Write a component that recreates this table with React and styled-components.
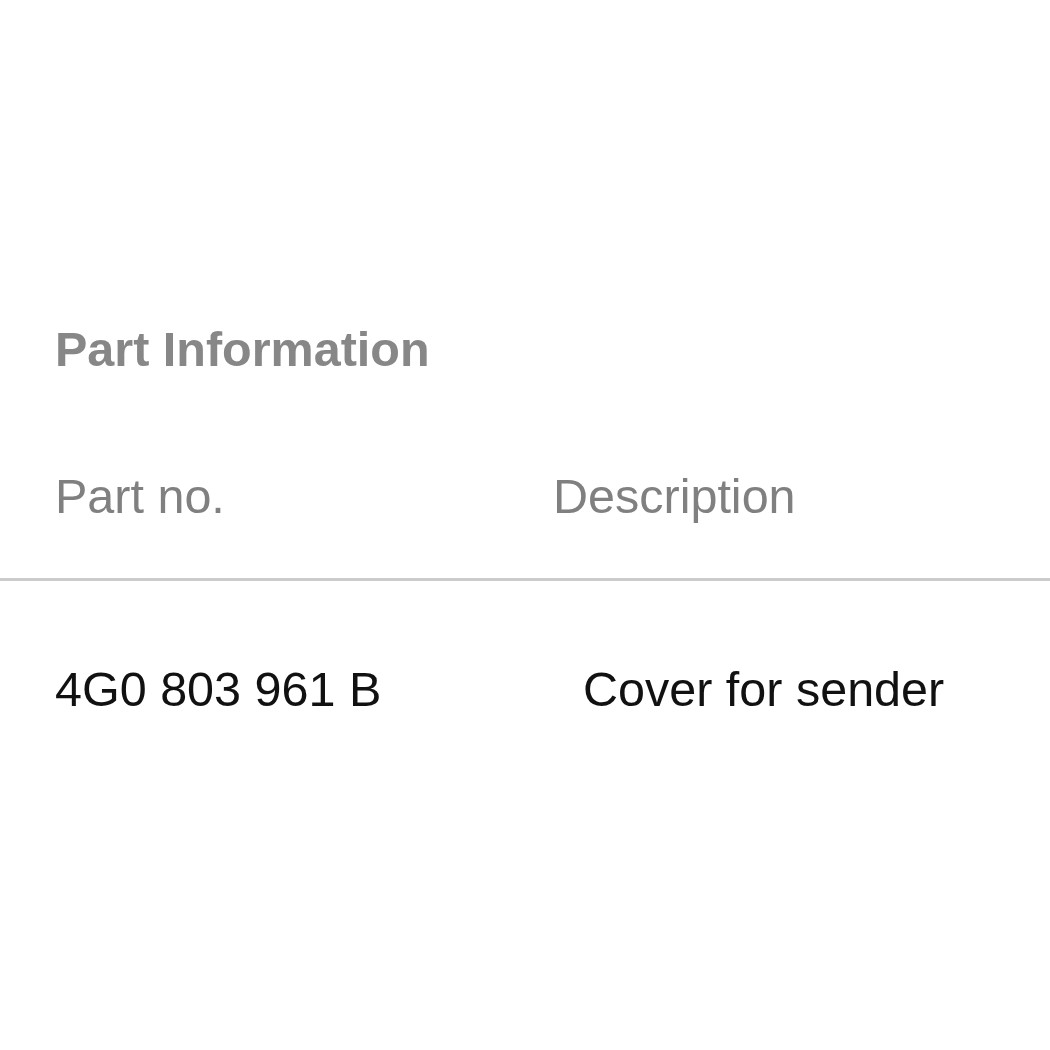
import React from "react";
import styled, { createGlobalStyle } from "styled-components";

const Global = createGlobalStyle`
  html, body { margin: 0; padding: 0; background: #ffffff; }
  body { font-family: "Liberation Sans", Arial, sans-serif; }
`;

const Page = styled.div`
  width: 1050px;
  min-height: 1050px;
  padding-top: 321px;
  box-sizing: border-box;
  background: #ffffff;
`;

const Title = styled.h2`
  margin: 0 0 0 55px;
  font-size: 48.5px;
  line-height: 56px;
  font-weight: 700;
  color: #878787;
`;

const Table = styled.div`
  margin-top: 91px;
  display: flex;
  flex-direction: column;
`;

const Row = styled.div`
  display: grid;
  grid-template-columns: 498px 1fr;
  padding-left: 55px;
  padding-top: ${(p) => p.$top || 0}px;
  padding-bottom: ${(p) => p.$bottom || 0}px;
  border-bottom: ${(p) => (p.$divider ? "3px solid #cbcbcb" : "none")};
`;

const Cell = styled.div`
  font-size: 48.5px;
  line-height: 56px;
  white-space: nowrap;
  color: ${(p) => (p.$head ? "#808080" : "#111111")};
  padding-left: ${(p) => p.$indent || 0}px;
`;

export default function App() {
  return (
    <>
      <Global />
      <Page>
        <Title>Part Information</Title>
        <Table>
          <Row $bottom={54} $divider>
            <Cell $head>Part no.</Cell>
            <Cell $head>Description</Cell>
          </Row>
          <Row $top={80}>
            <Cell>4G0 803 961 B</Cell>
            <Cell $indent={30}>Cover for sender</Cell>
          </Row>
        </Table>
      </Page>
    </>
  );
}
